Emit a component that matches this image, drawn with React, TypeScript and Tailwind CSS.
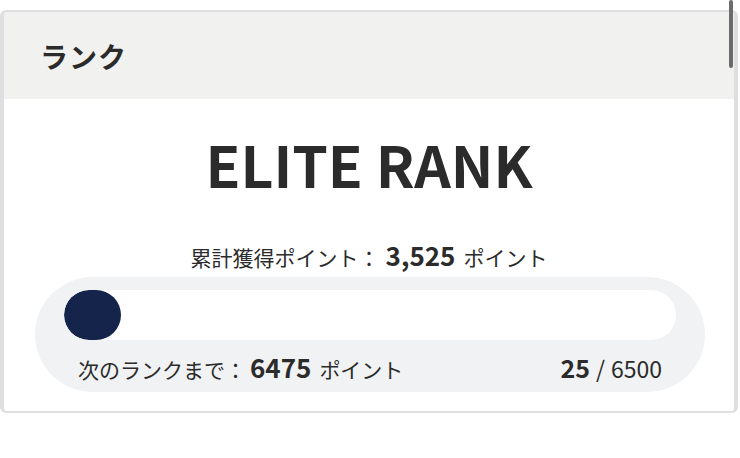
import React from "react";

const font = { fontFamily: '"Noto Sans CJK JP", "Noto Sans", sans-serif' };

export default function App() {
  const current = 25;
  const max = 6500;
  const pct = Math.max((current / max) * 100, 0);
  return (
    <div className="relative w-[740px] h-[458px] bg-white text-[#2b2b2b]" style={font}>
      <div className="absolute right-[7px] top-0 w-[4px] h-[68px] rounded-full bg-[#6b6b6b]" />
      <div className="pt-[10px]">
        <div className="w-[738px] h-[403px] border-l-[4px] border-r-[4px] border-t-[2px] border-b-[2px] border-[#dedfe0] rounded-[6px] overflow-hidden bg-white">
          <div className="h-[87px] bg-[#f1f1ef] flex items-center pl-[36px]">
            <span className="text-[28px] font-bold tracking-[1px]">ランク</span>
          </div>
          <div className="flex flex-col items-center">
            <div className="mt-[24px] text-[57px] leading-[80px] font-bold">ELITE RANK</div>
            <div className="mt-[36px] flex items-baseline text-[21px] leading-[32px]">
              <span>累計獲得ポイント：</span>
              <span className="ml-[6px] text-[26px] font-bold">3,525</span>
              <span className="ml-[8px]">ポイント</span>
            </div>
            <div className="mt-[4px] w-[670px] h-[115px] rounded-[58px] bg-[#f1f2f4] px-[29px] pt-[13px] self-start ml-[31px]">
              <div className="h-[50px] rounded-full bg-white overflow-hidden">
                <div className="h-full min-w-[57px] rounded-full bg-[#15244a]" style={{ width: `${pct}%` }} />
              </div>
              <div className="mt-[10px] px-[14px] flex items-baseline justify-between text-[21px] leading-[34px]">
                <div className="flex items-baseline">
                  <span>次のランクまで：</span>
                  <span className="ml-[4px] text-[26px] font-bold">6475</span>
                  <span className="ml-[8px]">ポイント</span>
                </div>
                <div className="flex items-baseline">
                  <span className="text-[25px] font-bold">25</span>
                  <span className="ml-[6px] text-[23px]">/</span>
                  <span className="ml-[6px] text-[23px]">6500</span>
                </div>
              </div>
            </div>
          </div>
        </div>
      </div>
    </div>
  );
}
